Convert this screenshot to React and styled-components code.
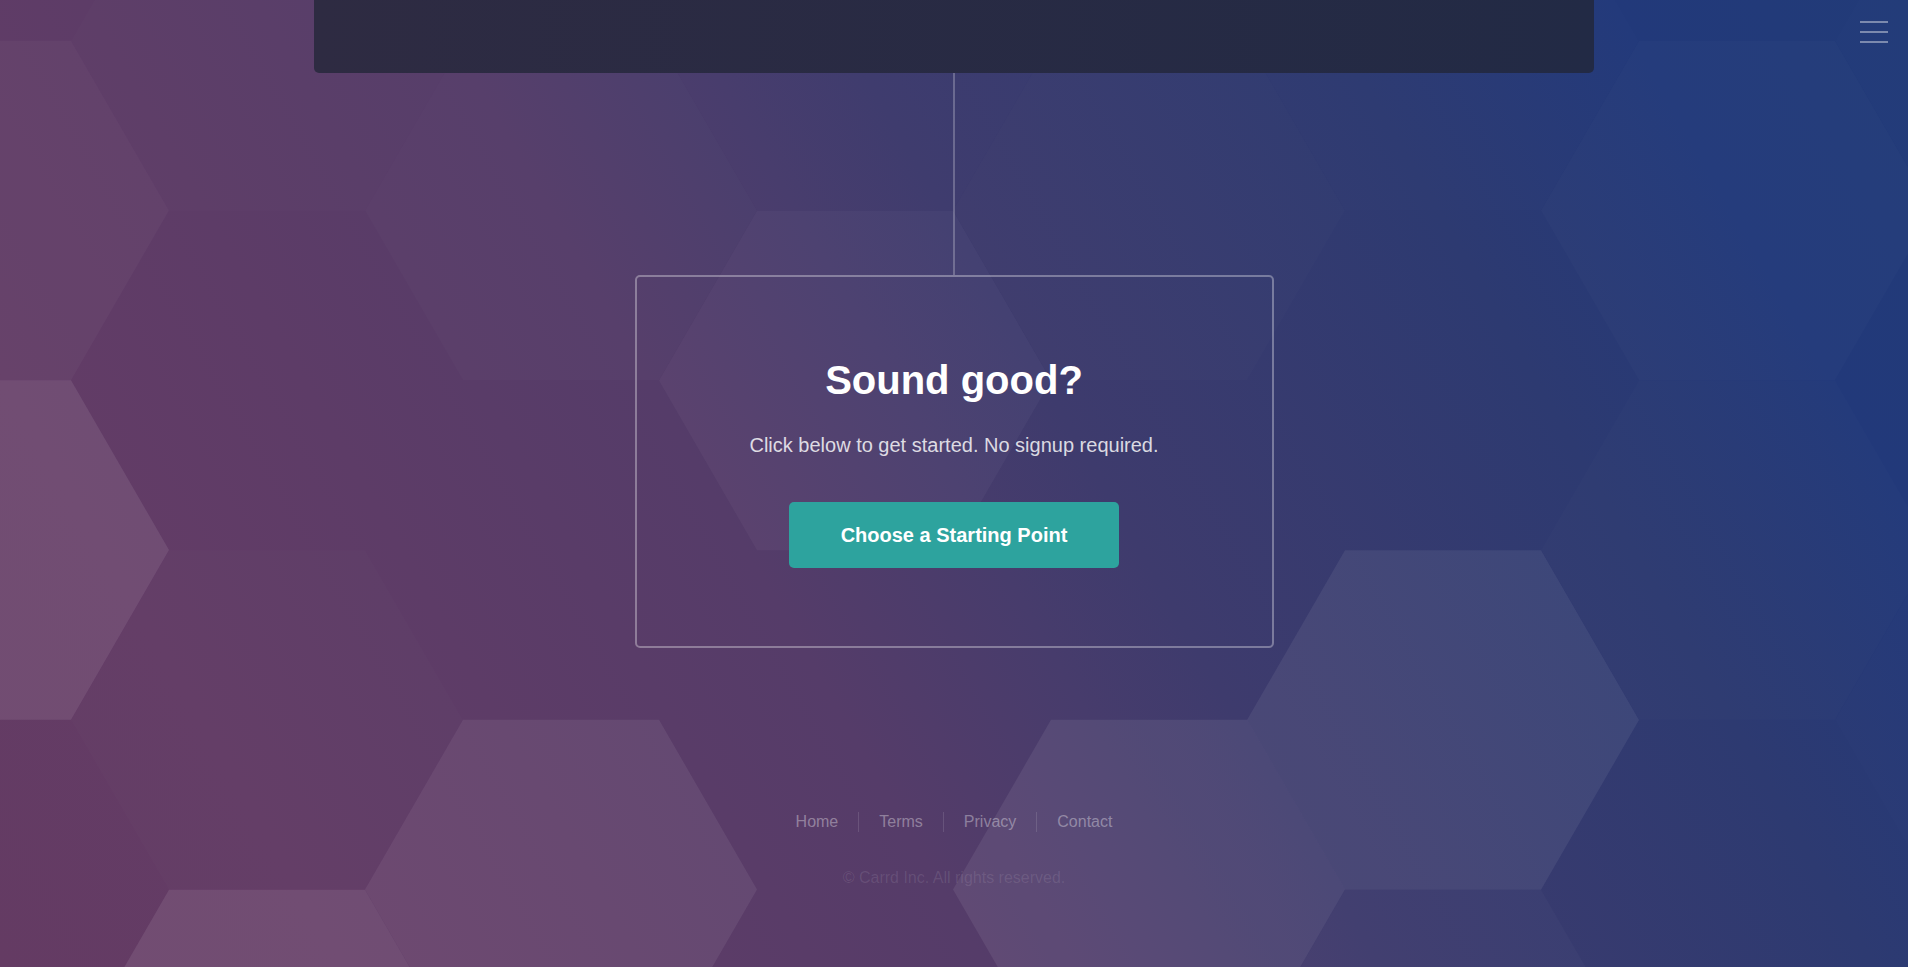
import styled, { createGlobalStyle } from 'styled-components';

// hex grid: flat-top, side 196, columns 294 apart, odd columns shifted half a row
const SIDE = 196;
const HALF_H = 169.74;
const shades = [
  [0, 0.03, 0.09, 0],
  [0.012, 0, 0.01, 0.09],
  [0, 0.015, 0, 0.07],
  [0.008, 0.035, 0, 0],
  [0, 0.012, 0, 0.075],
  [0.008, 0.005, 0.065, 0.025],
  [0, 0.015, 0.01, 0],
  [0.008, 0, 0.008, 0],
];

const hexPoints = (cx, cy) =>
  [
    [cx - SIDE, cy],
    [cx - SIDE / 2, cy - HALF_H],
    [cx + SIDE / 2, cy - HALF_H],
    [cx + SIDE, cy],
    [cx + SIDE / 2, cy + HALF_H],
    [cx - SIDE / 2, cy + HALF_H],
  ]
    .map((p) => p.join(','))
    .join(' ');

const cells = [];
shades.forEach((col, c) => {
  const cx = -27 + c * 294;
  const firstY = c % 2 === 0 ? -129 : 41;
  col.forEach((alpha, r) => {
    const cy = firstY + r * 339.5;
    cells.push({ key: `${c}-${r}`, points: hexPoints(cx, cy), alpha });
  });
});

const links = ['Home', 'Terms', 'Privacy', 'Contact'];

const App = () => {
  return (
    <>
      <GlobalStyle />
      <Page>
        <Hexes width="1908" height="967" viewBox="0 0 1908 967" preserveAspectRatio="xMinYMin slice">
          {cells.map(({ key, points, alpha }) => (
            <polygon key={key} points={points} fill="#fff" fillOpacity={alpha} />
          ))}
        </Hexes>

        <MenuToggle aria-label="Menu">
          <span />
          <span />
          <span />
        </MenuToggle>

        <Main>
          <TopBar />
          <Connector />
          <Card>
            <Heading>Sound good?</Heading>
            <Lead>Click below to get started. No signup required.</Lead>
            <CtaButton>Choose a Starting Point</CtaButton>
          </Card>

          <Footer>
            <FooterNav>
              {links.map((label, i) => (
                <FooterLink key={label} $first={i === 0} href="#">
                  {label}
                </FooterLink>
              ))}
            </FooterNav>
            <Copyright>© Carrd Inc. All rights reserved.</Copyright>
          </Footer>
        </Main>
      </Page>
    </>
  );
};

const GlobalStyle = createGlobalStyle`
  html, body {
    margin: 0;
    padding: 0;
  }
  body {
    font-family: "Liberation Sans", Arial, sans-serif;
    background: #473c6c;
  }
  * {
    box-sizing: border-box;
  }
`;

const Page = styled.div`
  position: relative;
  min-height: 100vh;
  overflow: hidden;
  background: linear-gradient(
    60deg,
    #643b63 0%,
    #633c66 14%,
    #5d3c67 26%,
    #553c69 40%,
    #473c6c 50%,
    #3e3b6d 56%,
    #2d3a71 76%,
    #22397a 88%,
    #223b78 100%
  );
`;

const Hexes = styled.svg`
  position: absolute;
  inset: 0;
  width: 100%;
  height: 100%;
  pointer-events: none;
`;

const MenuToggle = styled.button`
  position: absolute;
  top: 21px;
  right: 20px;
  width: 28px;
  height: 22px;
  padding: 0;
  border: 0;
  background: none;
  display: flex;
  flex-direction: column;
  justify-content: space-between;
  cursor: pointer;
  z-index: 2;

  span {
    display: block;
    height: 2px;
    background: rgba(255, 255, 255, 0.4);
  }
`;

const Main = styled.main`
  position: relative;
  z-index: 1;
  display: flex;
  flex-direction: column;
  align-items: center;
`;

const TopBar = styled.div`
  width: 1280px;
  height: 73px;
  border-radius: 0 0 5px 5px;
  background: linear-gradient(90deg, #2e2b42, #222a45);
`;

const Connector = styled.div`
  width: 2px;
  height: 202px;
  background: rgba(255, 255, 255, 0.24);
`;

const Card = styled.section`
  width: 639px;
  padding: 79px 0 78px;
  border: 2px solid rgba(255, 255, 255, 0.33);
  border-radius: 5px;
  display: flex;
  flex-direction: column;
  align-items: center;
  text-align: center;
`;

const Heading = styled.h2`
  margin: 0;
  font-size: 40px;
  line-height: 48px;
  font-weight: 700;
  color: #fff;
`;

const Lead = styled.p`
  margin: 26px 0 0;
  font-size: 20px;
  line-height: 30px;
  color: rgba(255, 255, 255, 0.82);
`;

const CtaButton = styled.button`
  margin-top: 42px;
  width: 330px;
  height: 66px;
  border: 0;
  border-radius: 5px;
  background: #2da39e;
  color: #fff;
  font-family: inherit;
  font-size: 20px;
  font-weight: 700;
  cursor: pointer;
`;

const Footer = styled.footer`
  margin-top: 164px;
  display: flex;
  flex-direction: column;
  align-items: center;
  gap: 36px;
`;

const FooterNav = styled.nav`
  display: flex;
  align-items: center;
`;

const FooterLink = styled.a`
  padding: 0 20px;
  font-size: 16px;
  line-height: 20px;
  color: rgba(255, 255, 255, 0.36);
  text-decoration: none;
  border-left: ${({ $first }) => ($first ? '0' : '1px solid rgba(255, 255, 255, 0.12)')};
`;

const Copyright = styled.p`
  margin: 0;
  font-size: 16px;
  line-height: 20px;
  color: rgba(255, 255, 255, 0.1);
`;

export default App;
